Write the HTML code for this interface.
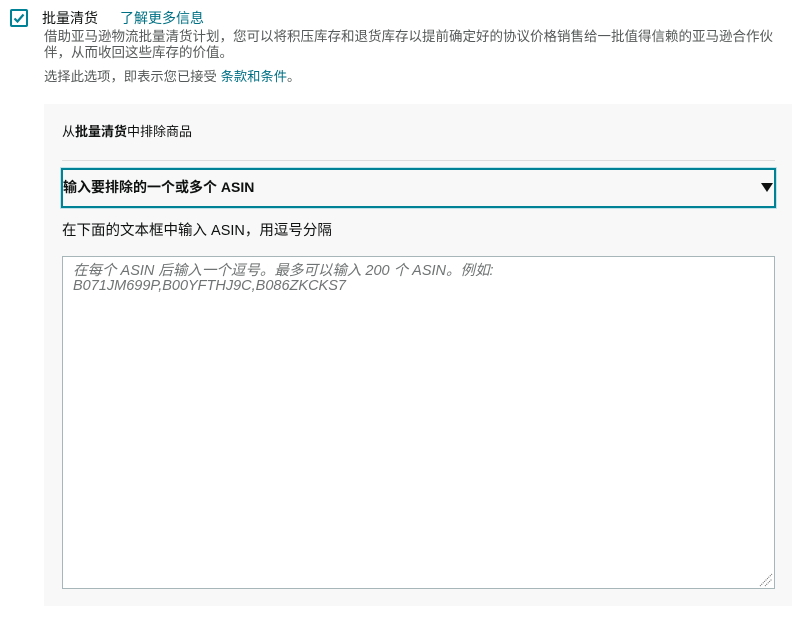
<!DOCTYPE html>
<html><head><meta charset="utf-8"><style>
*{margin:0;padding:0;box-sizing:border-box}
body{width:802px;height:621px;background:#fff;font-family:"Liberation Sans","Noto Sans CJK SC",sans-serif;position:relative;overflow:hidden;color:#0f1111}
.abs{position:absolute;white-space:nowrap}
.cb{left:10px;top:9px;width:18px;height:18px;border:2px solid #008296;border-radius:2px;background:#fff}
.panel{left:44px;top:104px;width:748px;height:502px;background:#f8f8f8}
.sel{left:61px;top:168px;width:715px;height:40px;border:2px solid #008296;background:#f8f8f8;box-shadow:0 0 0 1px #bfe3e8}
.ta{left:62px;top:256px;width:713px;height:333px;border:1px solid #a6b6b9;background:#fff}
</style></head><body>
<div class="abs cb"><svg width="14" height="14" viewBox="0 0 14 14" style="position:absolute;left:0;top:0"><path d="M2.5 7.5 L5.5 10.5 L11.5 3.5" stroke="#008296" stroke-width="2.2" fill="none"/></svg></div>
<div class="abs" style="left:42px;top:9px;font-size:14px;line-height:18px;color:#0f1111">批量清货</div>
<div class="abs" style="left:120px;top:9px;font-size:14px;line-height:18px;color:#007185">了解更多信息</div>
<div class="abs" style="left:44px;top:29px;font-size:13.5px;line-height:16px;color:#565959">借助亚马逊物流批量清货计划，您可以将积压库存和退货库存以提前确定好的协议价格销售给一批值得信赖的亚马逊合作伙<br>伴，从而收回这些库存的价值。</div>
<div class="abs" style="left:44px;top:69px;font-size:13.3px;line-height:16px;color:#565959">选择此选项，即表示您已接受 <span style="color:#007185">条款和条件</span>。</div>
<div class="abs panel"></div>
<div class="abs" style="left:62px;top:123px;font-size:13px;line-height:17px">从<b>批量清货</b>中排除商品</div>
<div class="abs" style="left:62px;top:160px;width:713px;height:1px;background:#ddd"></div>
<div class="abs sel"></div>
<div class="abs" style="left:63px;top:179px;font-size:14px;line-height:17px;font-weight:bold">输入要排除的一个或多个 ASIN</div>
<svg class="abs" style="left:761px;top:183px" width="12" height="9" viewBox="0 0 12 9"><path d="M0 0H12L6 9Z" fill="#0f1111"/></svg>
<div class="abs" style="left:62px;top:222px;font-size:14.5px;line-height:18px">在下面的文本框中输入 ASIN，用逗号分隔</div>
<div class="abs ta"></div>
<div class="abs" style="left:73px;top:264px;font-size:14.5px;line-height:15px;color:#6f7373;font-style:italic">在每个 ASIN 后输入一个逗号。最多可以输入 200 个 ASIN。例如:<br>B071JM699P,B00YFTHJ9C,B086ZKCKS7</div>
<svg class="abs" style="left:759px;top:573px" width="14" height="14" viewBox="0 0 14 14"><path d="M1 13L13 1M6 13L13 6" stroke="#666" stroke-width="1" stroke-dasharray="1 1"/></svg>
</body></html>
